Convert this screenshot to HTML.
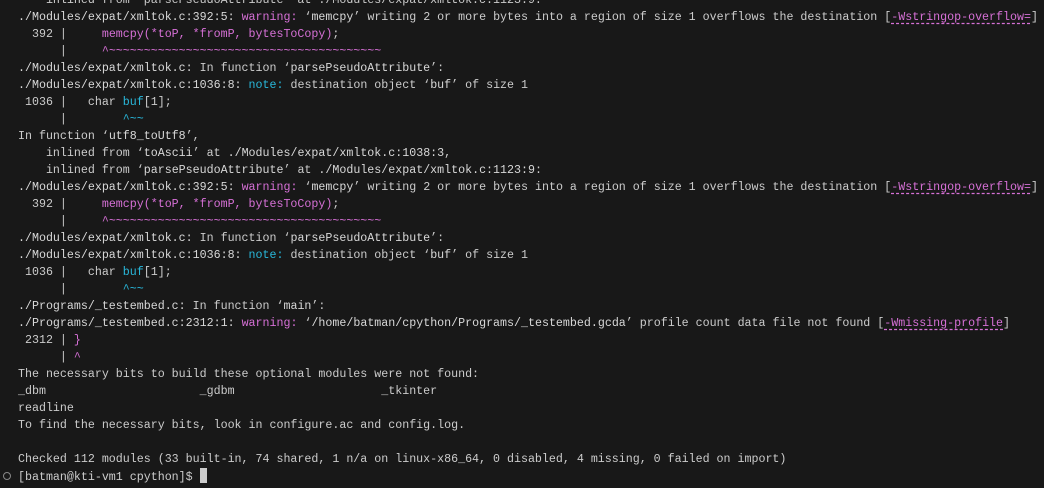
<!DOCTYPE html>
<html><head><meta charset="utf-8"><style>
html,body{margin:0;padding:0;background:#181818;width:1044px;height:488px;overflow:hidden}
#t{position:absolute;left:18px;top:-8px;font-family:"Liberation Mono",monospace;font-size:11.65px;line-height:17px;color:#cccccc;white-space:pre}
.m{color:#d670d6}.c{color:#29b8db}.b{font-weight:normal;color:#d8d8d8}
.u{color:#d670d6;text-decoration:underline dashed;text-underline-offset:3px}
.cur{display:inline-block;width:7px;height:15px;background:#cccccc;vertical-align:-3px}
#dot{position:absolute;left:3px;top:472px;width:6px;height:6px;border:1px solid #888;border-radius:50%}
</style></head><body>
<div id="dot"></div>
<div id="t">    inlined from ‘parsePseudoAttribute’ at ./Modules/expat/xmltok.c:1123:9:
<span class="b">./Modules/expat/xmltok.c:392:5:</span> <span class="m">warning: </span>‘<span class="b">memcpy</span>’ writing 2 or more bytes into a region of size 1 overflows the destination [<span class="u">-Wstringop-overflow=</span>]
  392 |     <span class="m">memcpy(*toP, *fromP, bytesToCopy)</span>;
      |     <span class="m">^~~~~~~~~~~~~~~~~~~~~~~~~~~~~~~~~~~~~~~~</span>
<span class="b">./Modules/expat/xmltok.c:</span> In function ‘<span class="b">parsePseudoAttribute</span>’:
<span class="b">./Modules/expat/xmltok.c:1036:8:</span> <span class="c">note: </span>destination object ‘<span class="b">buf</span>’ of size 1
 1036 |   char <span class="c">buf</span>[1];
      |        <span class="c">^~~</span>
In function ‘<span class="b">utf8_toUtf8</span>’,
    inlined from ‘<span class="b">toAscii</span>’ at <span class="b">./Modules/expat/xmltok.c:1038:3</span>,
    inlined from ‘<span class="b">parsePseudoAttribute</span>’ at <span class="b">./Modules/expat/xmltok.c:1123:9</span>:
<span class="b">./Modules/expat/xmltok.c:392:5:</span> <span class="m">warning: </span>‘<span class="b">memcpy</span>’ writing 2 or more bytes into a region of size 1 overflows the destination [<span class="u">-Wstringop-overflow=</span>]
  392 |     <span class="m">memcpy(*toP, *fromP, bytesToCopy)</span>;
      |     <span class="m">^~~~~~~~~~~~~~~~~~~~~~~~~~~~~~~~~~~~~~~~</span>
<span class="b">./Modules/expat/xmltok.c:</span> In function ‘<span class="b">parsePseudoAttribute</span>’:
<span class="b">./Modules/expat/xmltok.c:1036:8:</span> <span class="c">note: </span>destination object ‘<span class="b">buf</span>’ of size 1
 1036 |   char <span class="c">buf</span>[1];
      |        <span class="c">^~~</span>
<span class="b">./Programs/_testembed.c:</span> In function ‘<span class="b">main</span>’:
<span class="b">./Programs/_testembed.c:2312:1:</span> <span class="m">warning: </span>‘<span class="b">/home/batman/cpython/Programs/_testembed.gcda</span>’ profile count data file not found [<span class="u">-Wmissing-profile</span>]
 2312 | <span class="m">}</span>
      | <span class="m">^</span>
The necessary bits to build these optional modules were not found:
_dbm                      _gdbm                     _tkinter
readline
To find the necessary bits, look in configure.ac and config.log.

Checked 112 modules (33 built-in, 74 shared, 1 n/a on linux-x86_64, 0 disabled, 4 missing, 0 failed on import)
[batman@kti-vm1 cpython]$ <span class="cur"></span></div>
</body></html>
